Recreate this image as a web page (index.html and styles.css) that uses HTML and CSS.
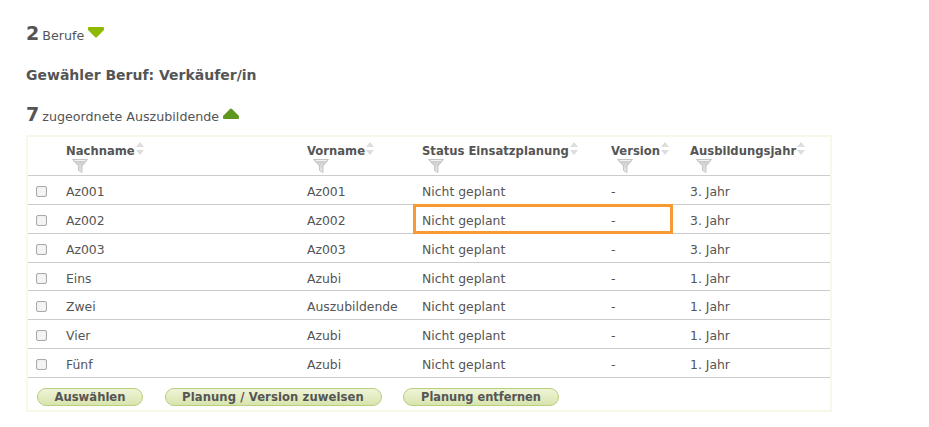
FILE: index.html
```html
<!DOCTYPE html>
<html lang="de">
<head>
    <meta charset="UTF-8">
    <title>Auszubildende</title>
    <link rel="stylesheet" href="styles.css">
</head>
<body>
    <svg class="defs" width="0" height="0">
        <defs>
            <linearGradient id="funnel-fill" x1="0" y1="0" x2="0" y2="1">
                <stop offset="0" stop-color="#c9c9c9"/>
                <stop offset="1" stop-color="#e8e8e8"/>
            </linearGradient>
            <symbol id="funnel" viewBox="0 0 16 14">
                <path d="M0.5 0.5 H15.5 L10 7 V13.5 L6.5 11.5 V7 Z" fill="url(#funnel-fill)" stroke="#bbb" stroke-width="0.8"/>
                <path d="M2.5 1.5 H13.5" stroke="#f2f2f2" stroke-width="1"/>
            </symbol>
        </defs>
    </svg>

    <div class="count-line first">
        <span class="count">2</span>
        <span>Berufe</span>
        <svg class="toggle" width="16" height="11" viewBox="0 0 16 11"><path d="M1 0 H15 Q16 0 16 1 V3 L9 10 Q8 11 7 10 L0 3 V1 Q0 0 1 0 Z" fill="#8fb800"/></svg>
    </div>
    <h2 class="selected">Gewähler Beruf: Verkäufer/in</h2>
    <div class="count-line">
        <span class="count">7</span>
        <span>zugeordnete Auszubildende</span>
        <svg class="toggle" width="16" height="11" viewBox="0 0 16 11"><path d="M7 1 Q8 0 9 1 L16 8 V10 Q16 11 15 11 H1 Q0 11 0 10 V8 Z" fill="#5f961f"/></svg>
    </div>

    <div class="table-box">
        <table class="list">
            <thead>
                <tr>
                    <th class="col-check"></th>
                    <th class="col-name"><span class="head">Nachname<i class="sort"></i></span><svg class="funnel"><use href="#funnel"/></svg></th>
                    <th class="col-first"><span class="head">Vorname<i class="sort"></i></span><svg class="funnel"><use href="#funnel"/></svg></th>
                    <th class="col-status"><span class="head">Status Einsatzplanung<i class="sort"></i></span><svg class="funnel"><use href="#funnel"/></svg></th>
                    <th class="col-version"><span class="head">Version<i class="sort"></i></span><svg class="funnel"><use href="#funnel"/></svg></th>
                    <th><span class="head">Ausbildungsjahr<i class="sort"></i></span><svg class="funnel"><use href="#funnel"/></svg></th>
                </tr>
            </thead>
            <tbody>
                <tr><td><i class="check"></i></td><td>Az001</td><td>Az001</td><td>Nicht geplant</td><td>-</td><td>3. Jahr</td></tr>
                <tr><td><i class="check"></i></td><td>Az002</td><td>Az002</td><td>Nicht geplant</td><td>-</td><td>3. Jahr</td></tr>
                <tr><td><i class="check"></i></td><td>Az003</td><td>Az003</td><td>Nicht geplant</td><td>-</td><td>3. Jahr</td></tr>
                <tr class="short"><td><i class="check"></i></td><td>Eins</td><td>Azubi</td><td>Nicht geplant</td><td>-</td><td>1. Jahr</td></tr>
                <tr><td><i class="check"></i></td><td>Zwei</td><td>Auszubildende</td><td>Nicht geplant</td><td>-</td><td>1. Jahr</td></tr>
                <tr><td><i class="check"></i></td><td>Vier</td><td>Azubi</td><td>Nicht geplant</td><td>-</td><td>1. Jahr</td></tr>
                <tr><td><i class="check"></i></td><td>Fünf</td><td>Azubi</td><td>Nicht geplant</td><td>-</td><td>1. Jahr</td></tr>
            </tbody>
        </table>
        <div class="buttons">
            <button class="btn btn-select">Auswählen</button>
            <button class="btn btn-assign">Planung / Version zuweisen</button>
            <button class="btn btn-remove">Planung entfernen</button>
        </div>
        <div class="highlight"></div>
    </div>
</body>
</html>
```

FILE: styles.css
```css
body {
    margin: 0;
    padding: 0 26px;
    font-family: "DejaVu Sans", Verdana, sans-serif;
    font-size: 12.4px;
    color: #555;
    background-color: white;
}

.defs {
    display: block;
}

.count-line {
    display: flex;
    align-items: baseline;
    gap: 3px;
    height: 24px;
    line-height: 24px;
    color: #555;
    font-size: 12.7px;
}

.count-line.first {
    padding-top: 21px;
}

.count {
    font-size: 19px;
    font-weight: bold;
    color: #555;
}

.toggle {
    align-self: center;
    margin: -1px 0 0 1px;
}

.selected {
    margin: 21px 0 18px;
    font-size: 14px;
    line-height: 18px;
    font-weight: bold;
    color: #555;
}

.table-box {
    position: relative;
    box-sizing: border-box;
    width: 806px;
    height: 277px;
    margin-top: 9px;
    border: 2px solid #f7f9e6;
}

.list {
    width: 100%;
    border-collapse: collapse;
    table-layout: fixed;
}

.list th {
    height: 32px;
    padding: 6px 0 0 0;
    text-align: left;
    vertical-align: top;
    font-size: 11.6px;
    line-height: 16px;
    color: #555;
    border-bottom: 1px solid #ccc;
}

.list td {
    height: 20px;
    padding: 8px 0 0 0;
    vertical-align: top;
    line-height: 16px;
    border-bottom: 1px solid #ccc;
}

.list .short td {
    height: 19px;
}

.col-check { width: 38px; }
.col-name { width: 241px; }
.col-first { width: 115px; }
.col-status { width: 189px; }
.col-version { width: 79px; }

.head {
    display: block;
    white-space: nowrap;
}

.sort {
    display: inline-block;
    width: 9px;
    height: 14px;
    margin: -1px 0 0 1px;
    vertical-align: top;
    position: relative;
}

.sort::before,
.sort::after {
    content: "";
    position: absolute;
    left: 0;
    border-left: 4.5px solid transparent;
    border-right: 4.5px solid transparent;
}

.sort::before {
    top: 0;
    border-bottom: 5px solid #ddd;
}

.sort::after {
    top: 8px;
    border-top: 5px solid #ddd;
}

.funnel {
    display: block;
    width: 16px;
    height: 14px;
    margin-left: 6px;
}

.check {
    display: block;
    box-sizing: border-box;
    width: 11px;
    height: 11px;
    margin: 2px 0 0 8px;
    border: 1px solid #aaa;
    border-radius: 2px;
    background-color: #f4f4f4;
    box-shadow: inset 0 0 1px #ccc;
}

.buttons {
    display: flex;
    gap: 21.5px;
    padding: 10px 0 0 9px;
}

.btn {
    height: 18px;
    padding: 0;
    font-family: inherit;
    font-size: 11.6px;
    font-weight: bold;
    color: #555;
    background: linear-gradient(#eff4d8, #d8e4ae);
    border: 1px solid #b8cf7c;
    border-radius: 9px;
}

.btn-select { width: 106px; }
.btn-assign { width: 217px; letter-spacing: 0.1px; }
.btn-remove { width: 156px; font-size: 11.4px; }

.highlight {
    position: absolute;
    left: 385px;
    top: 67px;
    box-sizing: border-box;
    width: 260px;
    height: 30px;
    border: 3px solid #f89a32;
}
```
